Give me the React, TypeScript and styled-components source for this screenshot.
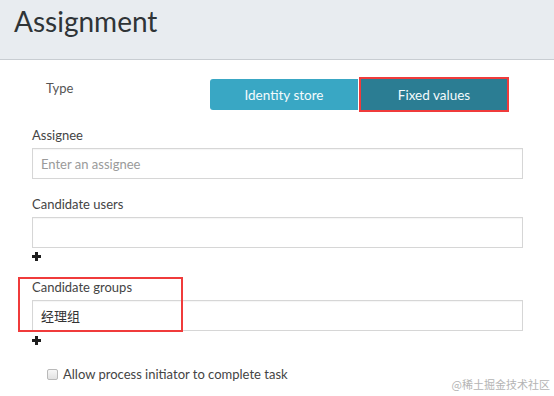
import React from 'react';
import styled, { createGlobalStyle } from 'styled-components';

const GlobalStyle = createGlobalStyle`
  html, body {
    margin: 0;
    padding: 0;
    background: #ffffff;
  }
  body {
    font-family: Lato, 'Noto Sans', sans-serif;
    color: #333;
  }
`;

const Page = styled.div`
  position: relative;
  width: 554px;
  height: 396px;
  overflow: hidden;
  background: #fff;
`;

const Header = styled.header`
  height: 59px;
  background: #e8ecf0;
  border-bottom: 1px solid #c8cdd2;
  display: flex;
  align-items: flex-start;
  padding-left: 14px;
`;

const Title = styled.h1`
  margin: 4px 0 0;
  font-size: 28px;
  font-weight: 400;
  line-height: 34px;
  color: #2f3437;
`;

const Form = styled.div`
  padding: 17px 31px 0 32px;
`;

const TypeRow = styled.div`
  display: flex;
  align-items: center;
  height: 35px;
`;

const TypeLabel = styled.span`
  width: 164px;
  padding-left: 14px;
  align-self: flex-start;
  margin-top: 3px;
  font-size: 13px;
  line-height: 16px;
  color: #555;
`;

const ButtonGroup = styled.div`
  display: flex;
  align-items: center;
  gap: 1px;
`;

const ToggleButton = styled.button<{ $active?: boolean }>`
  box-sizing: border-box;
  width: ${(p) => (p.$active ? '150px' : '148px')};
  height: ${(p) => (p.$active ? '35px' : '31px')};
  border: ${(p) => (p.$active ? '2px solid #f03b3b' : 'none')};
  border-radius: ${(p) => (p.$active ? '0' : '3px 0 0 3px')};
  background: ${(p) => (p.$active ? '#2b7d93' : '#39a7c4')};
  color: #f4fbfd;
  font-family: Lato, sans-serif;
  font-size: 13.5px;
  padding: 0;
  cursor: pointer;
`;

const Field = styled.div<{ $top: number }>`
  margin-top: ${(p) => p.$top}px;
`;

const Label = styled.div`
  font-size: 13px;
  line-height: 16px;
  color: #444;
`;

const Input = styled.input`
  box-sizing: border-box;
  display: block;
  width: 100%;
  height: 31px;
  margin-top: 5px;
  padding: 0 8px;
  border: 1px solid #d6d6d6;
  box-shadow: inset 0 1px 1px rgba(0, 0, 0, 0.04);
  font-family: Lato, 'Noto Sans CJK SC', sans-serif;
  font-size: 13px;
  color: #333;
  outline: none;
  &::placeholder {
    color: #9a9a9a;
  }
`;

const AddButton = styled.div<{ $top: number }>`
  margin-top: ${(p) => p.$top}px;
  width: 9px;
  height: 9px;
  display: flex;
`;

const CheckRow = styled.label`
  display: flex;
  align-items: center;
  gap: 5px;
  margin-top: 21px;
  padding-left: 15px;
  font-size: 13px;
  line-height: 16px;
  color: #444;
`;

const Check = styled.span`
  box-sizing: border-box;
  width: 11px;
  height: 11px;
  border: 1px solid #b9b9b9;
  border-radius: 2px;
  background: linear-gradient(#f7f7f7, #e2e2e2);
`;

const Highlight = styled.div`
  position: absolute;
  left: 18px;
  top: 277px;
  width: 165px;
  height: 55px;
  box-sizing: border-box;
  border: 2px solid #f03b3b;
  pointer-events: none;
`;

const Watermark = styled.div`
  position: absolute;
  right: 4px;
  bottom: 5px;
  font-family: 'Noto Sans CJK SC', sans-serif;
  font-size: 11px;
  line-height: 14px;
  color: #b4b4b4;
`;

const Plus = () => (
  <svg width="9" height="9" viewBox="0 0 9 9">
    <rect x="3" y="0" width="3" height="9" fill="#1e1e1e" />
    <rect x="0" y="3" width="9" height="3" fill="#1e1e1e" />
  </svg>
);

export default function App() {
  return (
    <Page>
      <GlobalStyle />
      <Header>
        <Title>Assignment</Title>
      </Header>
      <Form>
        <TypeRow>
          <TypeLabel>Type</TypeLabel>
          <ButtonGroup>
            <ToggleButton>Identity store</ToggleButton>
            <ToggleButton $active>Fixed values</ToggleButton>
          </ButtonGroup>
        </TypeRow>
        <Field $top={15}>
          <Label>Assignee</Label>
          <Input placeholder="Enter an assignee" />
        </Field>
        <Field $top={17}>
          <Label>Candidate users</Label>
          <Input />
        </Field>
        <AddButton $top={4}>
          <Plus />
        </AddButton>
        <Field $top={18}>
          <Label>Candidate groups</Label>
          <Input defaultValue="经理组" />
        </Field>
        <AddButton $top={5}>
          <Plus />
        </AddButton>
        <CheckRow>
          <Check />
          Allow process initiator to complete task
        </CheckRow>
      </Form>
      <Highlight />
      <Watermark>@稀土掘金技术社区</Watermark>
    </Page>
  );
}
